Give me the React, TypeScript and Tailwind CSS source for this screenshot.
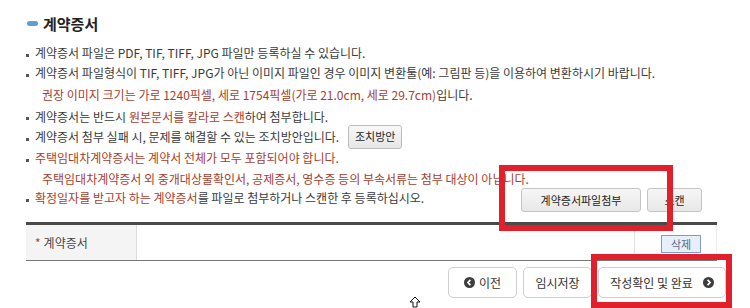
import React from 'react';

const red = 'text-[#a5402f]';

const Bullet: React.FC<{ children: React.ReactNode; className?: string }> = ({ children, className = '' }) => (
  <div className={`flex items-center ${className}`}>
    <span className="mr-[6px] mt-[5px] h-[3px] w-[3px] shrink-0 bg-[#555]" />
    {children}
  </div>
);

const CircleArrow: React.FC<{ dir: 'left' | 'right' }> = ({ dir }) => (
  <svg width="11" height="11" viewBox="0 0 12 12" className="shrink-0">
    <circle cx="6" cy="6" r="6" fill="#3d3d3d" />
    {dir === 'left' ? (
      <path d="M7 3.2 L4.3 6 L7 8.8" fill="none" stroke="#fff" strokeWidth="1.8" />
    ) : (
      <path d="M5 3.2 L7.7 6 L5 8.8" fill="none" stroke="#fff" strokeWidth="1.8" />
    )}
  </svg>
);

export default function App() {
  return (
    <div
      className="relative h-[308px] w-[750px] overflow-hidden bg-white pl-[26px] text-[12px] text-[#3a3a3a]"
      style={{ fontFamily: '"Noto Sans CJK KR", "Noto Sans", sans-serif' }}
    >
      {/* title */}
      <div className="flex h-[43px] items-center pb-[2px] pt-[6px]">
        <span className="ml-[1px] mr-[5px] h-[5px] w-[11px] rounded-full bg-[#5b9fd6]" />
        <span className="text-[15px] font-bold leading-none text-[#222]">계약증서</span>
      </div>

      {/* notices */}
      <div className="flex flex-col leading-[19px]">
        <Bullet className="h-[19px]">
          <span>계약증서 파일은 PDF, TIF, TIFF, JPG 파일만 등록하실 수 있습니다.</span>
        </Bullet>
        <Bullet className="h-[21px]">
          <span>계약증서 파일형식이 TIF, TIFF, JPG가 아닌 이미지 파일인 경우 이미지 변환툴(예: 그림판 등)을 이용하여 변환하시기 바랍니다.</span>
        </Bullet>
        <div className="flex h-[22px] items-center pl-[16px]">
          <span className={red}>권장 이미지 크기는 가로 1240픽셀, 세로 1754픽셀(가로 21.0cm, 세로 29.7cm)</span>
          <span>입니다.</span>
        </div>
        <Bullet className="h-[22px]">
          <span>계약증서는 반드시 </span>
          <span className={`${red} ml-[3px]`}>원본문서를 칼라로 스캔</span>
          <span>하여 첨부합니다.</span>
        </Bullet>
        <Bullet className="h-[19px]">
          <span>계약증서 첨부 실패 시, 문제를 해결할 수 있는 조치방안입니다.</span>
          <button className="ml-[9px] h-[24px] w-[54px] shrink-0 rounded-[3px] border border-[#bdbdbd] bg-gradient-to-b from-[#f8f8f8] to-[#e6e6e6] text-[11px] text-[#222]">
            조치방안
          </button>
        </Bullet>
        <Bullet className={`h-[23px] ${red}`}>
          <span>주택임대차계약증서는 계약서 전체가 모두 포함되어야 합니다.</span>
        </Bullet>
        <div className={`flex h-[19px] items-center pl-[16px] ${red}`}>
          주택임대차계약증서 외 중개대상물확인서, 공제증서, 영수증 등의 부속서류는 첨부 대상이 아닙니다.
        </div>
        <div className="flex items-start pr-[48px]">
          <Bullet className="h-[19px]">
            <span className={red}>확정일자를 받고자 하는 계약증서</span>
            <span>를 파일로 첨부하거나 스캔한 후 등록하십시오.</span>
          </Bullet>
          <div className="ml-auto flex gap-[6px]">
            <button className="h-[24px] w-[120px] rounded-[3px] border border-[#c4c4c4] bg-gradient-to-b from-[#f6f6f6] to-[#e8e8e8] text-[11px] text-[#222]">
              계약증서파일첨부
            </button>
            <button className="h-[24px] w-[55px] rounded-[3px] border border-[#c4c4c4] bg-gradient-to-b from-[#f6f6f6] to-[#e8e8e8] text-[11px] text-[#222]">
              스캔
            </button>
          </div>
        </div>
      </div>

      {/* table */}
      <div className="mt-[10px] w-[691px] border-b border-t-[3px] border-b-[#777] border-t-[#4a4a4a]">
        <div className="flex h-[35px]">
          <div className="flex w-[111px] items-center border-r border-[#dcdcdc] bg-[#f4f4f4] pl-[9px] text-[12px] text-[#444]">
            <span className="mr-[3px] text-[#c0392b]">*</span>
            계약증서
          </div>
          <div className="flex-1 border-r border-[#e2e2e2]" />
          <div className="flex w-[82px] items-start border-r border-[#ececec] pl-[26px] pt-[10px]">
            <button className="h-[18px] w-[40px] border border-[#7f9dc4] bg-[#e9eff8] text-[11px] leading-none text-[#556b8a]">
              삭제
            </button>
          </div>
        </div>
      </div>

      {/* bottom buttons */}
      <div className="mt-[6px] flex w-[700px] justify-end gap-[6px]">
        <button className="flex h-[31px] w-[69px] items-center justify-center gap-[4px] rounded-[5px] border border-[#cfcfcf] bg-white text-[12px] text-[#333]">
          <CircleArrow dir="left" />
          이전
        </button>
        <button className="flex h-[31px] w-[69px] items-center justify-center rounded-[5px] border border-[#cfcfcf] bg-white text-[12px] text-[#333]">
          임시저장
        </button>
        <button className="flex h-[31px] w-[128px] items-center justify-center gap-[10px] rounded-[5px] border border-[#cfcfcf] bg-white text-[12px] text-[#333]">
          작성확인 및 완료
          <CircleArrow dir="right" />
        </button>
      </div>

      {/* red annotation boxes */}
      <div className="absolute left-[499px] top-[165px] h-[66px] w-[174px] border-[6px] border-[#e0202a]" />
      <div className="absolute left-[591px] top-[254px] h-[54px] w-[141px] border-[6px] border-[#e0202a]" />

      {/* mouse cursor */}
      <svg className="absolute left-[409px] top-[296px]" width="12" height="12" viewBox="0 0 12 12">
        <path d="M6 1 L11 6 L8 6 L8 11 L4 11 L4 6 L1 6 Z" fill="#fff" stroke="#111" strokeWidth="1" />
      </svg>
    </div>
  );
}
